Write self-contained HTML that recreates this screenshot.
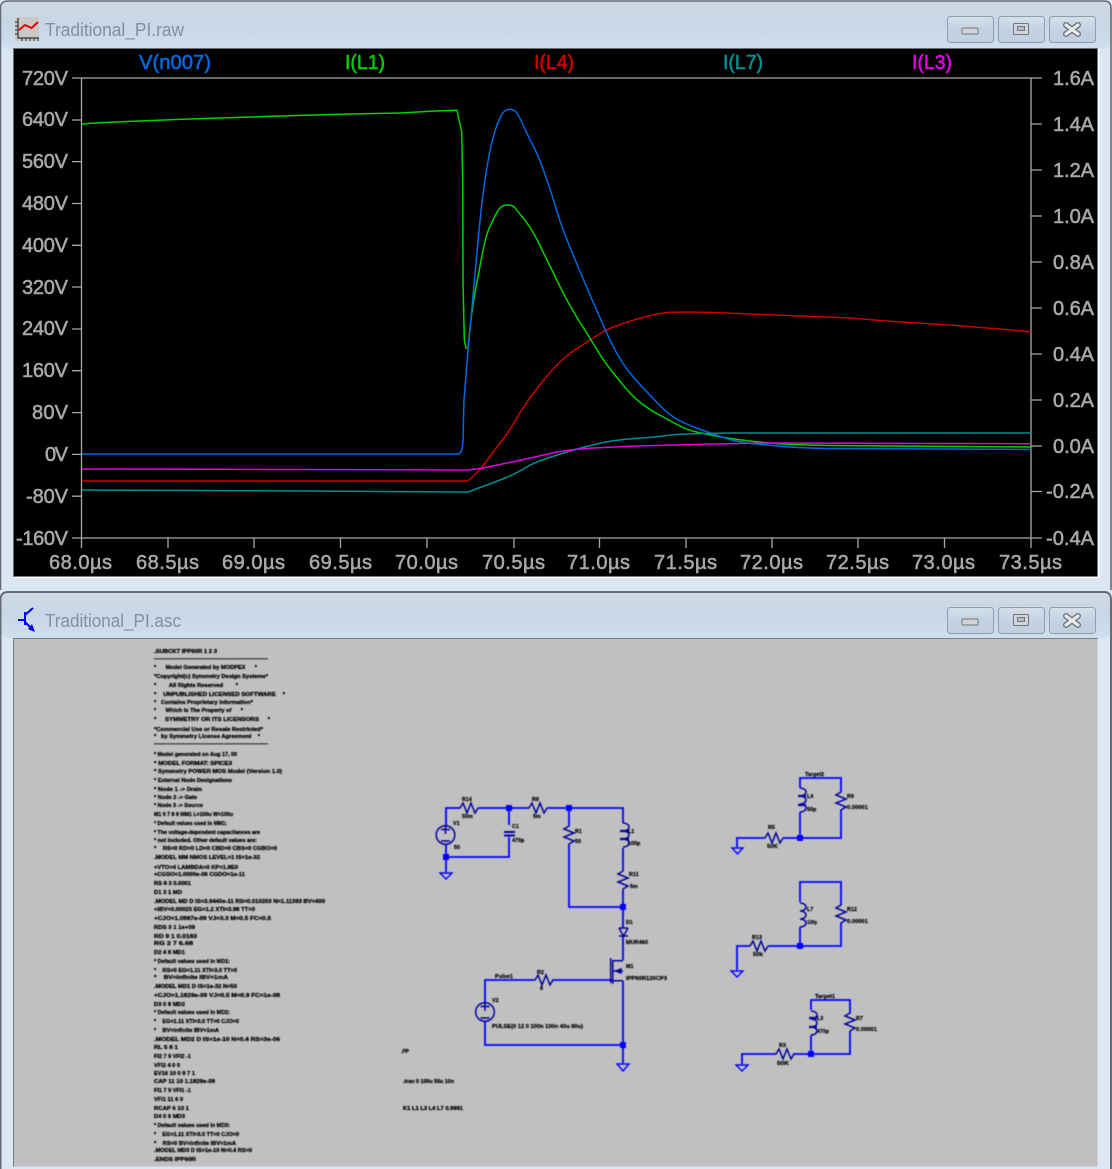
<!DOCTYPE html>
<html><head><meta charset="utf-8"><title>Traditional_PI</title>
<style>
html,body{margin:0;padding:0;background:#dbe8f4;width:1112px;height:1169px;overflow:hidden}
svg{display:block}
text{font-family:"Liberation Sans",sans-serif}
.ax text{font-weight:normal;font-size:20px;fill:#a8a8a8;stroke:#a8a8a8;stroke-width:.55}
.hd text{font-weight:normal;font-size:20px;stroke-width:.55}
.t{font-size:18px;fill:#8090a4}
.sp text{font-size:5.6px;font-weight:bold;fill:#000;stroke:#000;stroke-width:.28;white-space:pre}
.lb text{font-size:5.4px;font-weight:bold;fill:#000;stroke:#000;stroke-width:.2}
</style></head><body>
<svg width="1112" height="1169" viewBox="0 0 1112 1169" xmlns="http://www.w3.org/2000/svg">
<defs>
<linearGradient id="tb" x1="0" y1="0" x2="0" y2="1"><stop offset="0" stop-color="#cfd9e4"/><stop offset=".5" stop-color="#c8d6e5"/><stop offset="1" stop-color="#cfdfee"/></linearGradient>
<linearGradient id="bt" x1="0" y1="0" x2="0" y2="1"><stop offset="0" stop-color="#d6e0eb"/><stop offset=".5" stop-color="#c4d2e1"/><stop offset="1" stop-color="#c0d0e0"/></linearGradient>
<filter id="b1" x="-5%" y="-5%" width="110%" height="110%"><feGaussianBlur stdDeviation=".5"/></filter>
<filter id="b2" x="-5%" y="-5%" width="110%" height="110%"><feGaussianBlur stdDeviation=".35"/></filter>
<path id="rv" d="M0 0L0 1L-5 4L5 8L-5 12L5 16L0 19L0 20" fill="none"/>
<path id="rh" d="M0 0L2 0L5 -5L9 5L13 -5L17 5L20 0" fill="none"/>
<path id="lv" d="M0 0a6 4 0 0 1 0 8a6 4 0 0 1 0 8a6 4 0 0 1 0 8" fill="none"/>
<g id="btn">
<rect x="947.5" y="0.5" width="46" height="26" rx="3" fill="url(#bt)" stroke="#8d9db2"/>
<rect x="998.5" y="0.5" width="46" height="26" rx="3" fill="url(#bt)" stroke="#8d9db2"/>
<rect x="1049.5" y="0.5" width="46" height="26" rx="3" fill="url(#bt)" stroke="#8d9db2"/>
<rect x="962" y="12" width="16" height="6" rx="1" fill="#d4d4d4" stroke="#6e7680"/>
<rect x="1013.5" y="7.5" width="15" height="11" rx="1" fill="#d4d4d4" stroke="#6e7680"/>
<rect x="1017.5" y="10.5" width="7" height="4" fill="#aebccb" stroke="#6e7680"/>
<path d="M1066 9L1078 18M1078 9L1066 18" stroke="#6e7680" stroke-width="6" stroke-linecap="round"/>
<path d="M1066 9L1078 18M1078 9L1066 18" stroke="#eaeaea" stroke-width="3.2" stroke-linecap="round"/>
</g>
</defs>

<!-- window 1 -->
<rect x="0" y="0" width="1112" height="592" fill="#dbe8f4"/>
<rect x="1" y="1" width="1110" height="48" rx="6" fill="url(#tb)"/>
<path d="M0.5 592V8Q0.5 1 8 1H1104Q1111 1 1111 8V592" fill="none" stroke="#666c74" stroke-width="1.6"/>
<rect x="13" y="48" width="1086.5" height="530" fill="#f6f9fc"/>
<rect x="13" y="48" width="1084.5" height="528.5" fill="#000"/>
<path d="M13.5 577V48.5H1098" fill="none" stroke="#6a6f76"/>
<rect x="15" y="17" width="24" height="24" fill="#c9c9c9"/>
<path d="M18 18V38H39" fill="none" stroke="#333" stroke-width="1.2"/>
<path d="M15 22h3M15 26h3M15 30h3M15 34h3M22 38v3M26 38v3M30 38v3M34 38v3M38 38v3" stroke="#333" stroke-width="1"/>
<path d="M19 30L25 25L31.5 28L38 22" fill="none" stroke="#e80000" stroke-width="2"/>
<text class="t" x="45" y="36" textLength="139" lengthAdjust="spacingAndGlyphs" filter="url(#b2)">Traditional_PI.raw</text>
<use href="#btn" y="16"/>

<!-- axes -->
<path d="M72 78H1042M72 538H1042M81.5 78V548M1031 78V548M72 120H81.5M72 161.6H81.5M72 203.5H81.5M72 245.3H81.5M72 287H81.5M72 329H81.5M72 370.7H81.5M72 412.6H81.5M72 454.4H81.5M72 496.2H81.5M1031 124H1042M1031 170H1042M1031 216H1042M1031 262H1042M1031 308H1042M1031 354H1042M1031 400H1042M1031 446H1042M1031 491.5H1042M168 538V548M254 538V548M340.5 538V548M427 538V548M514 538V548M599.5 538V548M686 538V548M772 538V548M858 538V548M944.5 538V548" stroke="#a8a8a8" stroke-width="1.3" fill="none"/>
<g class="ax" filter="url(#b2)">
<text x="22" y="85" textLength="46">720V</text>
<text x="22" y="126" textLength="46">640V</text>
<text x="22" y="168" textLength="46">560V</text>
<text x="22" y="210" textLength="46">480V</text>
<text x="22" y="252" textLength="46">400V</text>
<text x="22" y="294" textLength="46">320V</text>
<text x="22" y="335" textLength="46">240V</text>
<text x="22" y="377" textLength="46">160V</text>
<text x="32" y="419" textLength="36">80V</text>
<text x="45" y="461" textLength="23">0V</text>
<text x="26" y="503" textLength="42">-80V</text>
<text x="16" y="545" textLength="52">-160V</text>
<text x="1053" y="85" textLength="41">1.6A</text>
<text x="1053" y="131" textLength="41">1.4A</text>
<text x="1053" y="177" textLength="41">1.2A</text>
<text x="1053" y="223" textLength="41">1.0A</text>
<text x="1053" y="269" textLength="41">0.8A</text>
<text x="1053" y="315" textLength="41">0.6A</text>
<text x="1053" y="361" textLength="41">0.4A</text>
<text x="1053" y="407" textLength="41">0.2A</text>
<text x="1053" y="453" textLength="41">0.0A</text>
<text x="1046" y="498" textLength="48">-0.2A</text>
<text x="1046" y="545" textLength="48">-0.4A</text>
<text x="49" y="569" textLength="63">68.0µs</text>
<text x="136" y="569" textLength="63">68.5µs</text>
<text x="222" y="569" textLength="63">69.0µs</text>
<text x="309" y="569" textLength="63">69.5µs</text>
<text x="395" y="569" textLength="63">70.0µs</text>
<text x="482" y="569" textLength="63">70.5µs</text>
<text x="567" y="569" textLength="63">71.0µs</text>
<text x="654" y="569" textLength="63">71.5µs</text>
<text x="740" y="569" textLength="63">72.0µs</text>
<text x="826" y="569" textLength="63">72.5µs</text>
<text x="912" y="569" textLength="63">73.0µs</text>
<text x="999" y="569" textLength="63">73.5µs</text>
</g>
<g class="hd" filter="url(#b2)">
<text x="139" y="69" textLength="72" lengthAdjust="spacingAndGlyphs" fill="#0068e0" stroke="#0068e0">V(n007)</text>
<text x="345" y="69" textLength="40" lengthAdjust="spacingAndGlyphs" fill="#00d000" stroke="#00d000">I(L1)</text>
<text x="534" y="69" textLength="40" lengthAdjust="spacingAndGlyphs" fill="#d00000" stroke="#d00000">I(L4)</text>
<text x="723" y="69" textLength="40" lengthAdjust="spacingAndGlyphs" fill="#009090" stroke="#009090">I(L7)</text>
<text x="912" y="69" textLength="40" lengthAdjust="spacingAndGlyphs" fill="#e000e0" stroke="#e000e0">I(L3)</text>
</g>

<!-- traces -->
<g fill="none" stroke-width="1.5" stroke-linejoin="round">
<path stroke="#c80000" d="M82 481L468 481L474 475.5Q480 470 488.5 458.5Q497 447 503.5 438.5Q510 430 516.5 418.5Q523 407 534 392.5Q545 378 550 372.5Q555 367 561 361Q567 355 577 348.5Q587 342 597 335.5Q607 329 620 324.5Q633 320 646.5 316.5Q660 313 668.5 312.5Q677 312 688.5 312Q700 312 725 313L750 314L800 316L850 318L900 322L950 325L1000 329L1031 332"/>
<path stroke="#00d000" d="M82 124L100 122.7L140 121L182 119.3L227 117.7L272 116.3L315 115L360 113.7L400 113L435 111L457 110.3L459 120L461.7 132L462.7 180L463 282L464.3 340L466 348L468 348L470 328L471.5 315.5Q473 303 475.5 290Q478 277 480.5 263.5Q483 250 485 241.5Q487 233 489.5 227.5Q492 222 495 216Q498 210 500.5 207.5Q503 205 508 205Q513 205 515.5 208.5Q518 212 521.5 216Q525 220 530 227.5Q535 235 539 243.5Q543 252 547.5 261Q552 270 557.5 281.5Q563 293 570 305.5Q577 318 583.5 328Q590 338 596.5 349Q603 360 610.5 369.5Q618 379 625.5 388Q633 397 641.5 403.5Q650 410 658.5 414.5Q667 419 677 424.5Q687 430 698.5 432.5Q710 435 721.5 437Q733 439 750 441Q767 443 783.5 444Q800 445 830 445.5L1031 447"/>
<path stroke="#0068e0" d="M82 454L459 454L462 450L463 441L464 400L468 350L470 330L472.5 301.5Q475 273 477.5 246.5Q480 220 481.5 206.5Q483 193 485.5 176.5Q488 160 490.5 148.5Q493 137 495.5 129.5Q498 122 500.5 117Q503 112 505.5 110.5Q508 109 511.5 109.5Q515 110 517.5 114Q520 118 524 127Q528 136 532.5 144.5Q537 153 541 163.5Q545 174 549 186Q553 198 556.5 210Q560 222 566.5 238.5Q573 255 580 271.5Q587 288 593.5 303Q600 318 606.5 332.5Q613 347 619 357Q625 367 630 373Q635 379 640 384.5Q645 390 656 401.5Q667 413 675 418Q683 423 696.5 428Q710 433 723.5 437.5Q737 442 752 443.5Q767 445 783.5 446.5Q800 448 830 448.5L1031 449.5"/>
<path stroke="#008c8c" d="M82 490L300 491L468 492L480 487.5Q493 483 505 478Q517 473 525 468Q533 463 545 459Q557 455 568.5 451.5Q580 448 596.5 444Q613 440 635 438.5Q657 437 667 435.5Q677 434 703 433.5L730 433L1031 433"/>
<path stroke="#e000e0" d="M82 469L300 469.5L468 470L483 468L517 461L557 452Q575 449 593 448L637 446L713 444L767 443L1031 443.7"/>
</g>

<!-- window 2 -->
<rect x="0" y="590" width="1112" height="579" fill="#dbe8f4"/>
<rect x="1" y="593" width="1110" height="45" rx="6" fill="url(#tb)"/>
<path d="M0.5 1169V600Q0.5 592 8 592H1104Q1111 592 1111 600V1169" fill="none" stroke="#666c74" stroke-width="2"/>
<rect x="13" y="638" width="1084.5" height="528.5" fill="#c0c0c0"/>
<path d="M13.5 1167V638.5H1098" fill="none" stroke="#7b7f85"/>
<path d="M25 612V625M18 620H25M25 615L33 608M25 622L33 630" stroke="#0000f0" stroke-width="2" fill="none"/>
<path d="M35 632L28 629L32 624Z" fill="#0000f0"/>
<text class="t" x="45" y="627" textLength="136" lengthAdjust="spacingAndGlyphs" filter="url(#b2)">Traditional_PI.asc</text>
<use href="#btn" y="607"/>

<g filter="url(#b1)">
<g class="sp">
<text x="154" y="653" textLength="63" lengthAdjust="spacingAndGlyphs">.SUBCKT IPP60R 1 2 3</text>
<text x="154" y="660" textLength="114" lengthAdjust="spacingAndGlyphs">--------------------------------------------------------</text>
<text x="154" y="669" textLength="103" lengthAdjust="spacingAndGlyphs">*      Model Generated by MODPEX      *</text>
<text x="154" y="678" textLength="114" lengthAdjust="spacingAndGlyphs">*Copyright(c) Symmetry Design Systems*</text>
<text x="154" y="687" textLength="84" lengthAdjust="spacingAndGlyphs">*        All Rights Reserved        *</text>
<text x="154" y="696" textLength="131" lengthAdjust="spacingAndGlyphs">*    UNPUBLISHED LICENSED SOFTWARE    *</text>
<text x="154" y="704" textLength="99" lengthAdjust="spacingAndGlyphs">*   Contains Proprietary Information*</text>
<text x="154" y="712" textLength="89" lengthAdjust="spacingAndGlyphs">*      Which Is The Property of      *</text>
<text x="154" y="721" textLength="116" lengthAdjust="spacingAndGlyphs">*     SYMMETRY OR ITS LICENSORS     *</text>
<text x="154" y="731" textLength="109" lengthAdjust="spacingAndGlyphs">*Commercial Use or Resale Restricted*</text>
<text x="154" y="738" textLength="106" lengthAdjust="spacingAndGlyphs">*   by Symmetry License Agreement    *</text>
<text x="154" y="745" textLength="114" lengthAdjust="spacingAndGlyphs">--------------------------------------------------------</text>
<text x="154" y="756" textLength="83" lengthAdjust="spacingAndGlyphs">* Model generated on Aug 17, 00</text>
<text x="154" y="765" textLength="78" lengthAdjust="spacingAndGlyphs">* MODEL FORMAT: SPICE3</text>
<text x="154" y="773" textLength="128" lengthAdjust="spacingAndGlyphs">* Symmetry POWER MOS Model (Version 1.0)</text>
<text x="154" y="782" textLength="78" lengthAdjust="spacingAndGlyphs">* External Node Designations</text>
<text x="154" y="791" textLength="48" lengthAdjust="spacingAndGlyphs">* Node 1 -&gt; Drain</text>
<text x="154" y="799" textLength="43" lengthAdjust="spacingAndGlyphs">* Node 2 -&gt; Gate</text>
<text x="154" y="807" textLength="49" lengthAdjust="spacingAndGlyphs">* Node 3 -&gt; Source</text>
<text x="154" y="816" textLength="79" lengthAdjust="spacingAndGlyphs">M1 9 7 8 8 MM1 L=100u W=100u</text>
<text x="154" y="825" textLength="73" lengthAdjust="spacingAndGlyphs">* Default values used in MM1:</text>
<text x="154" y="834" textLength="106" lengthAdjust="spacingAndGlyphs">* The voltage-dependent capacitances are</text>
<text x="154" y="842" textLength="103" lengthAdjust="spacingAndGlyphs">* not included. Other default values are:</text>
<text x="154" y="850" textLength="123" lengthAdjust="spacingAndGlyphs">*    RS=0 RD=0 LD=0 CBD=0 CBS=0 CGBO=0</text>
<text x="154" y="859" textLength="106" lengthAdjust="spacingAndGlyphs">.MODEL MM NMOS LEVEL=1 IS=1e-32</text>
<text x="154" y="869" textLength="84" lengthAdjust="spacingAndGlyphs">+VTO=4 LAMBDA=0 KP=1.8E0</text>
<text x="154" y="876" textLength="91" lengthAdjust="spacingAndGlyphs">+CGSO=1.0000e-06 CGDO=1e-11</text>
<text x="154" y="885" textLength="37" lengthAdjust="spacingAndGlyphs">RS 8 3 0.0001</text>
<text x="154" y="894" textLength="28" lengthAdjust="spacingAndGlyphs">D1 3 1 MD</text>
<text x="154" y="903" textLength="171" lengthAdjust="spacingAndGlyphs">.MODEL MD D IS=3.9440e-11 RS=0.010203 N=1.11393 BV=400</text>
<text x="154" y="911" textLength="101" lengthAdjust="spacingAndGlyphs">+IBV=0.00025 EG=1.2 XTI=3.98 TT=0</text>
<text x="154" y="920" textLength="117" lengthAdjust="spacingAndGlyphs">+CJO=1.0887e-09 VJ=3.3 M=0.5 FC=0.5</text>
<text x="154" y="929" textLength="41" lengthAdjust="spacingAndGlyphs">RDS 3 1 1e+09</text>
<text x="154" y="938" textLength="43" lengthAdjust="spacingAndGlyphs">RD 9 1 0.0183</text>
<text x="154" y="945" textLength="39" lengthAdjust="spacingAndGlyphs">RG 2 7 6.68</text>
<text x="154" y="954" textLength="31" lengthAdjust="spacingAndGlyphs">D2 4 8 MD1</text>
<text x="154" y="963" textLength="76" lengthAdjust="spacingAndGlyphs">* Default values used in MD1:</text>
<text x="154" y="972" textLength="83" lengthAdjust="spacingAndGlyphs">*    RS=0 EG=1.11 XTI=3.0 TT=0</text>
<text x="154" y="979" textLength="74" lengthAdjust="spacingAndGlyphs">*    BV=infinite IBV=1mA</text>
<text x="154" y="988" textLength="83" lengthAdjust="spacingAndGlyphs">.MODEL MD1 D IS=1e-32 N=50</text>
<text x="154" y="997" textLength="126" lengthAdjust="spacingAndGlyphs">+CJO=1.1829e-09 VJ=0.5 M=0.9 FC=1e-08</text>
<text x="154" y="1006" textLength="31" lengthAdjust="spacingAndGlyphs">D3 0 8 MD2</text>
<text x="154" y="1014" textLength="76" lengthAdjust="spacingAndGlyphs">* Default values used in MD2:</text>
<text x="154" y="1023" textLength="85" lengthAdjust="spacingAndGlyphs">*    EG=1.11 XTI=3.0 TT=0 CJO=0</text>
<text x="154" y="1032" textLength="65" lengthAdjust="spacingAndGlyphs">*    BV=infinite IBV=1mA</text>
<text x="154" y="1041" textLength="126" lengthAdjust="spacingAndGlyphs">.MODEL MD2 D IS=1e-10 N=0.4 RS=3e-06</text>
<text x="154" y="1049" textLength="24" lengthAdjust="spacingAndGlyphs">RL 5 8 1</text>
<text x="154" y="1058" textLength="37" lengthAdjust="spacingAndGlyphs">FI2 7 9 VFI2 -1</text>
<text x="154" y="1067" textLength="26" lengthAdjust="spacingAndGlyphs">VFI2 4 0 0</text>
<text x="154" y="1075" textLength="41" lengthAdjust="spacingAndGlyphs">EV16 10 0 9 7 1</text>
<text x="154" y="1083" textLength="61" lengthAdjust="spacingAndGlyphs">CAP 11 10 1.1829e-09</text>
<text x="154" y="1092" textLength="37" lengthAdjust="spacingAndGlyphs">FI1 7 9 VFI1 -1</text>
<text x="154" y="1101" textLength="29" lengthAdjust="spacingAndGlyphs">VFI1 11 6 0</text>
<text x="154" y="1110" textLength="35" lengthAdjust="spacingAndGlyphs">RCAP 6 10 1</text>
<text x="154" y="1118" textLength="31" lengthAdjust="spacingAndGlyphs">D4 0 6 MD3</text>
<text x="154" y="1127" textLength="76" lengthAdjust="spacingAndGlyphs">* Default values used in MD3:</text>
<text x="154" y="1136" textLength="85" lengthAdjust="spacingAndGlyphs">*    EG=1.11 XTI=3.0 TT=0 CJO=0</text>
<text x="154" y="1145" textLength="82" lengthAdjust="spacingAndGlyphs">*    RS=0 BV=infinite IBV=1mA</text>
<text x="154" y="1152" textLength="98" lengthAdjust="spacingAndGlyphs">.MODEL MD3 D IS=1e-10 N=0.4 RS=0</text>
<text x="154" y="1161" textLength="42" lengthAdjust="spacingAndGlyphs">.ENDS IPP60R</text>
<text x="401" y="1053" textLength="8" lengthAdjust="spacingAndGlyphs">.PP</text>
<text x="403" y="1083" textLength="51" lengthAdjust="spacingAndGlyphs">.tran 0 100u 50u 10n</text>
<text x="403" y="1110" textLength="60" lengthAdjust="spacingAndGlyphs">K1 L1 L3 L4 L7 0.9991</text>
</g>

<!-- wires -->
<g fill="none" stroke="#0000ff" stroke-width="1.8">
<path d="M446 825V808H459M478 808H527M547 808H623V823M509 808V825M509 837V857H446M446 845V872"/>
<path d="M569 808V825M569 845V907H623M623 848V870M623 890V928M623 936V960M623 981V1063"/>
<path d="M533 980H485V1003M552 980H612M485 1022V1045H623"/>
<path d="M800 788V778H841V792M800 812V838H841V810M783 838H800M763 838H737V847"/>
<path d="M800 902V882H841V905M800 927V946H841V923M768 946H800M748 946H737V970"/>
<path d="M811 1010V1000H850V1013M811 1035V1054H850V1032M793 1054H811M775 1054H742V1064"/>
</g>
<!-- junctions -->
<g fill="#0000ff">
<rect x="506" y="805" width="6" height="6"/><rect x="566" y="805" width="6" height="6"/>
<rect x="443" y="854" width="6" height="6"/><rect x="620" y="904" width="6" height="6"/>
<rect x="620" y="1042" width="6" height="6"/><rect x="797" y="835" width="6" height="6"/>
<rect x="797" y="943" width="6" height="6"/><rect x="808" y="1051" width="6" height="6"/>
</g>
<!-- components -->
<g fill="none" stroke="#00009a" stroke-width="1.5">
<use href="#rh" x="458" y="808"/>
<use href="#rh" x="527" y="808"/>
<use href="#rv" x="569" y="825"/>
<use href="#rv" x="623" y="870"/>
<use href="#rh" x="533" y="980"/>
<use href="#rv" x="841" y="791"/>
<use href="#rv" x="841" y="904"/>
<use href="#rv" x="850" y="1012"/>
<use href="#rh" x="763" y="838"/>
<use href="#rh" x="748" y="946"/>
<use href="#rh" x="774" y="1054"/>
<use href="#lv" x="623" y="823"/>
<use href="#lv" x="800" y="788"/>
<use href="#lv" x="800" y="903"/>
<use href="#lv" x="811" y="1011"/>
<path d="M620 831H629M620 839H629M798 796H806M798 805H806M809 1018H817M809 1027H817" stroke-width="2.2"/>
<circle cx="445.5" cy="835" r="9.3"/>
<circle cx="485" cy="1012" r="9.3"/>
<path d="M441 829.5H450M445.5 825V834M441 841H450M480.5 1006.5H489.5M485 1003V1011M480.5 1018H489.5"/>
<path d="M504 832H515M504 835.5H515" stroke-width="2"/>
<path d="M619 928H628M619 936H628M619 928L623.5 936L628 928"/>
<path d="M610.7 958V983M612.8 960V984M612.8 960.7H623M612.8 971H623M612.8 980.7H623"/>
<path d="M616 971L621 969V973Z" fill="#00009a"/>
</g>
<g fill="none" stroke="#0000ff" stroke-width="1.4">
<path d="M440 873H452L446 879Z"/>
<path d="M617 1064H629L623 1071Z"/>
<path d="M732 848H743L737.5 854Z"/>
<path d="M731 971H743L737 977Z"/>
<path d="M736 1065H748L742 1071Z"/>
</g>
<g class="lb">
<text x="462" y="801">R14</text><text x="462" y="818">50m</text>
<text x="453" y="825">V1</text><text x="454" y="849">50</text>
<text x="532" y="801">R8</text><text x="533" y="818">5m</text>
<text x="512" y="828">C1</text><text x="512" y="842">470p</text>
<text x="575" y="833">R1</text><text x="575" y="843">50</text>
<text x="628" y="833">L1</text><text x="628" y="845">100p</text>
<text x="629" y="876">R11</text><text x="630" y="888">5m</text>
<text x="626" y="924">D1</text><text x="626" y="944" textLength="22" lengthAdjust="spacingAndGlyphs">MUR460</text>
<text x="626" y="968">M1</text><text x="626" y="980" textLength="41" lengthAdjust="spacingAndGlyphs">IPP60R120CP3</text>
<text x="495" y="978" textLength="18" lengthAdjust="spacingAndGlyphs">Pulse1</text>
<text x="537" y="974">R2</text><text x="540" y="990">8</text>
<text x="492" y="1002">V2</text>
<text x="492" y="1028" textLength="91" lengthAdjust="spacingAndGlyphs">PULSE(0 12 0 100n 100n 40u 80u)</text>
<text x="805" y="776" textLength="19" lengthAdjust="spacingAndGlyphs">Target2</text>
<text x="807" y="798">L4</text><text x="807" y="811">50p</text>
<text x="847" y="798">R9</text><text x="847" y="809" textLength="21" lengthAdjust="spacingAndGlyphs">0.00001</text>
<text x="768" y="829">R5</text><text x="767" y="848" textLength="11" lengthAdjust="spacingAndGlyphs">50K</text>
<text x="807" y="911">L7</text><text x="807" y="924" textLength="10" lengthAdjust="spacingAndGlyphs">100p</text>
<text x="847" y="911">R12</text><text x="847" y="923" textLength="21" lengthAdjust="spacingAndGlyphs">0.00001</text>
<text x="752" y="939">R13</text><text x="753" y="956" textLength="10" lengthAdjust="spacingAndGlyphs">50k</text>
<text x="815" y="998" textLength="20" lengthAdjust="spacingAndGlyphs">Target1</text>
<text x="817" y="1020">L3</text><text x="817" y="1033" textLength="12" lengthAdjust="spacingAndGlyphs">470p</text>
<text x="856" y="1020">R7</text><text x="856" y="1031" textLength="21" lengthAdjust="spacingAndGlyphs">0.00001</text>
<text x="779" y="1047">R3</text><text x="777" y="1065" textLength="12" lengthAdjust="spacingAndGlyphs">50K</text>
</g>
</g>
</svg>
</body></html>
